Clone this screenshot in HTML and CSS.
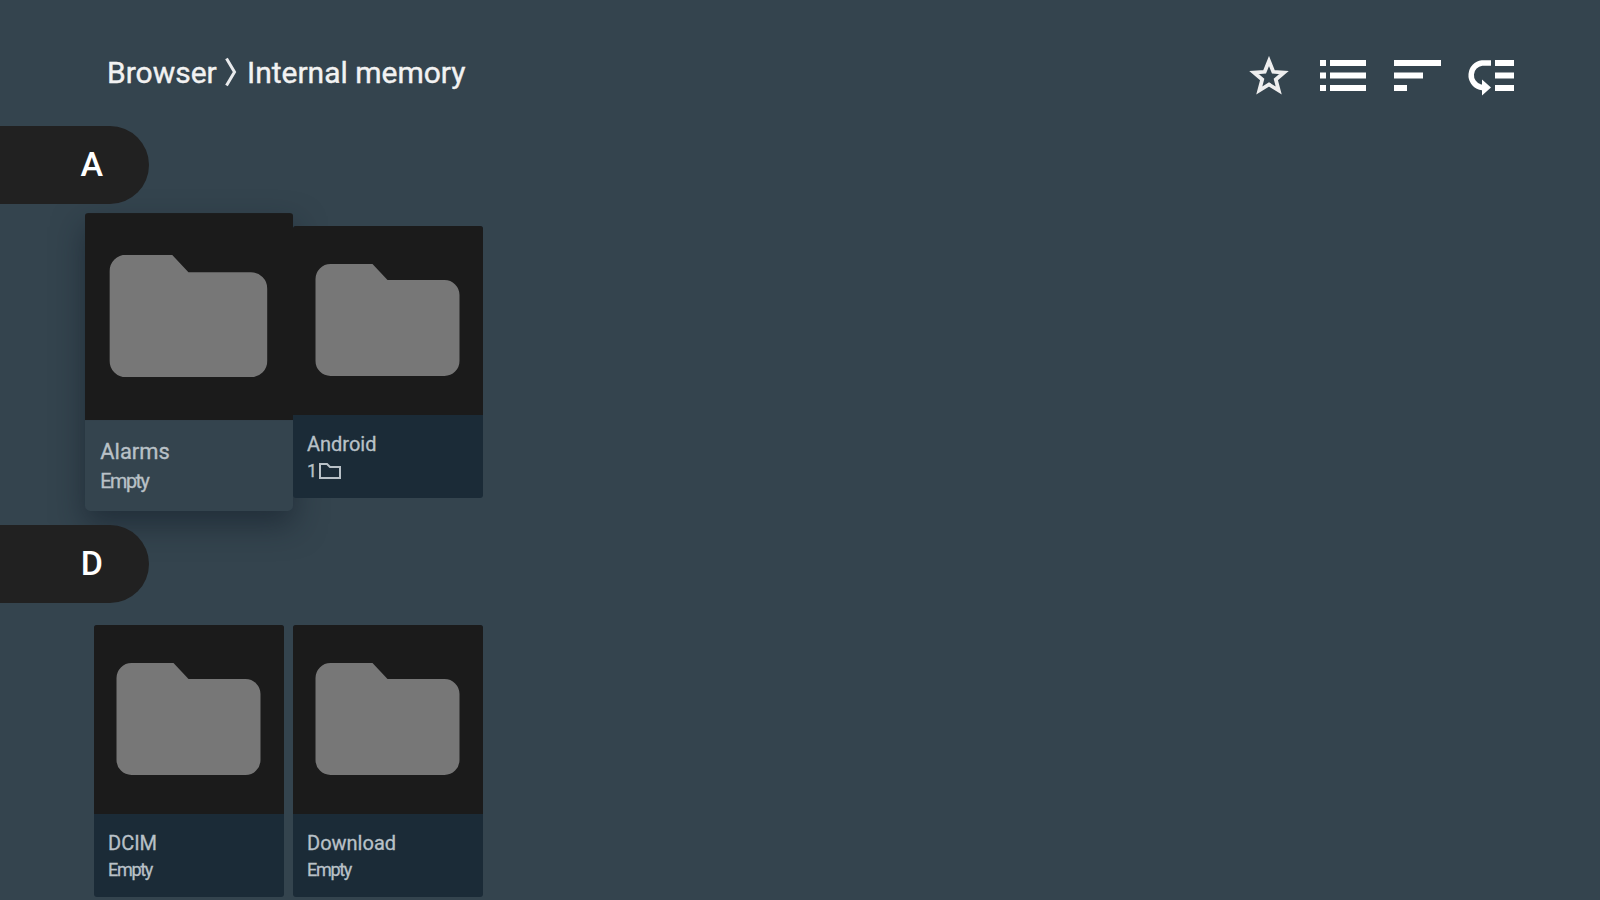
FILE: index.html
```html
<!DOCTYPE html>
<html lang="en">
<head>
  <meta charset="UTF-8" />
  <meta name="viewport" content="width=device-width, initial-scale=1.0" />
  <title>Browser</title>
  <link rel="stylesheet" href="styles.css">
</head>
<body>

  <svg class="defs">
    <symbol id="folder" viewBox="0 0 144 112">
      <path d="M15 0H57L72 16H129A15 15 0 0 1 144 31V97A15 15 0 0 1 129 112H15A15 15 0 0 1 0 97V15A15 15 0 0 1 15 0Z" />
    </symbol>
  </svg>

  <header class="topbar">
    <div class="path">
      <span class="root">Browser</span>
      <svg class="chevron" viewBox="0 0 14 30"><path d="M2.500 1.500L10.500 15L2.500 28.500" /></svg>
      <span class="current">Internal memory</span>
    </div>
    <div class="actions">
      <svg class="star" viewBox="0 0 40 40"><path d="M20 5L24.300 15.800L35 16.500L26.800 23.500L29.700 34.500L20 28.500L10.300 34.500L13.200 23.500L5 16.500L15.700 15.800Z" /></svg>
      <svg class="list" viewBox="0 0 46 32"><path d="M0 0h6v6H0zM10 0h36v6H10zM0 12.500h6v6H0zM10 12.500h36v6H10zM0 25h6v6H0zM10 25h36v6H10z" /></svg>
      <svg class="sort" viewBox="0 0 47 32"><path d="M0 0h47v6H0zM0 12.500h29v6H0zM0 25h13v6H0z" /></svg>
      <svg class="order" viewBox="0 0 47 36"><path class="arc" d="M24 3H15A12.300 12.300 0 0 0 13 27L18 28" /><path d="M15 19.500L24 27.500L15 35.500Z" /><path d="M28 0h19v6H28zM28 12.500h19v6H28zM28 25h19v6H28z" /></svg>
    </div>
  </header>

  <section class="group">
    <h2 class="letter">A</h2>
    <div class="cards">
      <div class="card selected">
        <div class="thumb"><svg class="folder"><use href="#folder" /></svg></div>
        <div class="info">
          <p class="name">Alarms</p>
          <p class="count">Empty</p>
        </div>
      </div>
      <div class="card">
        <div class="thumb"><svg class="folder"><use href="#folder" /></svg></div>
        <div class="info">
          <p class="name">Android</p>
          <p class="count">1 <svg class="mini" viewBox="0 0 22 16"><path d="M1 1H8L11 4H21V15H1Z" /></svg></p>
        </div>
      </div>
    </div>
  </section>

  <section class="group">
    <h2 class="letter">D</h2>
    <div class="cards">
      <div class="card">
        <div class="thumb"><svg class="folder"><use href="#folder" /></svg></div>
        <div class="info">
          <p class="name">DCIM</p>
          <p class="count">Empty</p>
        </div>
      </div>
      <div class="card">
        <div class="thumb"><svg class="folder"><use href="#folder" /></svg></div>
        <div class="info">
          <p class="name">Download</p>
          <p class="count">Empty</p>
        </div>
      </div>
    </div>
  </section>

</body>
</html>
```
FILE: styles.css
```css
* {
  box-sizing: border-box;
}

body {
  margin: 0;
  height: 900px;
  overflow: hidden;
  background: #34444e;
  color: #f2f2f2;
  font-family: Roboto, sans-serif;
}

.defs {
  display: block;
  width: 0;
  height: 0;
}

.topbar {
  display: flex;
  justify-content: space-between;
  height: 126px;
  padding: 56px 86px 0 107px;
}

.path {
  display: flex;
  height: 34px;
  line-height: 34px;
  font-size: 30px;
  white-space: nowrap;
  -webkit-text-stroke: 0.4px #f2f2f2;
}

.root {
  width: 117px;
}

.chevron {
  width: 14px;
  height: 30px;
  margin: 1px 9px 0 0;
  fill: none;
  stroke: #e8eaec;
  stroke-width: 3;
}

.actions {
  display: flex;
  align-items: flex-start;
  fill: #fff;
}

.star {
  width: 40px;
  height: 40px;
  margin-right: 31px;
  fill: none;
  stroke: #eee;
  stroke-width: 3.8;
}

.list {
  width: 46px;
  height: 32px;
  margin: 4px 28px 0 0;
}

.sort {
  width: 47px;
  height: 32px;
  margin: 4px 26px 0 0;
}

.order {
  width: 47px;
  height: 36px;
  margin-top: 4px;
  overflow: visible;
}

.arc {
  fill: none;
  stroke: #fff;
  stroke-width: 5.5;
}

.group {
  height: 399px;
}

.letter {
  position: relative;
  z-index: 2;
  width: 149px;
  height: 78px;
  margin: 0;
  padding-right: 46px;
  border-radius: 0 39px 39px 0;
  background: #212121;
  color: #fff;
  font-size: 34px;
  font-weight: 500;
  line-height: 76px;
  text-align: right;
}

.cards {
  display: flex;
  gap: 9px;
  padding: 21.5px 0 0 94px;
}

/* later cards paint over the shadow of the selected one */
.card {
  position: relative;
  width: 190px;
  height: 272px;
  overflow: hidden;
  border-radius: 3px;
  background: #1b2b37;
}

.thumb {
  height: 189px;
  padding: 38px 22px 0;
  background: #1b1b1b;
}

.folder {
  display: block;
  width: 145px;
  height: 112px;
  fill: #777;
}

.info {
  padding: 17px 14px 0;
  color: #b9c1c7;
  -webkit-text-stroke: 0.3px #b9c1c7;
}

.name,
.count {
  margin: 0;
  white-space: nowrap;
}

.name {
  font-size: 20px;
  line-height: 25px;
}

.count {
  display: flex;
  align-items: center;
  gap: 3px;
  font-size: 18px;
  line-height: 28px;
  letter-spacing: -1.3px;
}

.mini {
  width: 22px;
  height: 16px;
  fill: none;
  stroke: #b9c1c7;
  stroke-width: 2;
}

.selected {
  transform: scale(1.095);
  border-radius: 3px 3px 5px 5px;
  background: #34444e;
  box-shadow: 0 12px 28px rgba(15, 25, 38, 0.5);
}
```
